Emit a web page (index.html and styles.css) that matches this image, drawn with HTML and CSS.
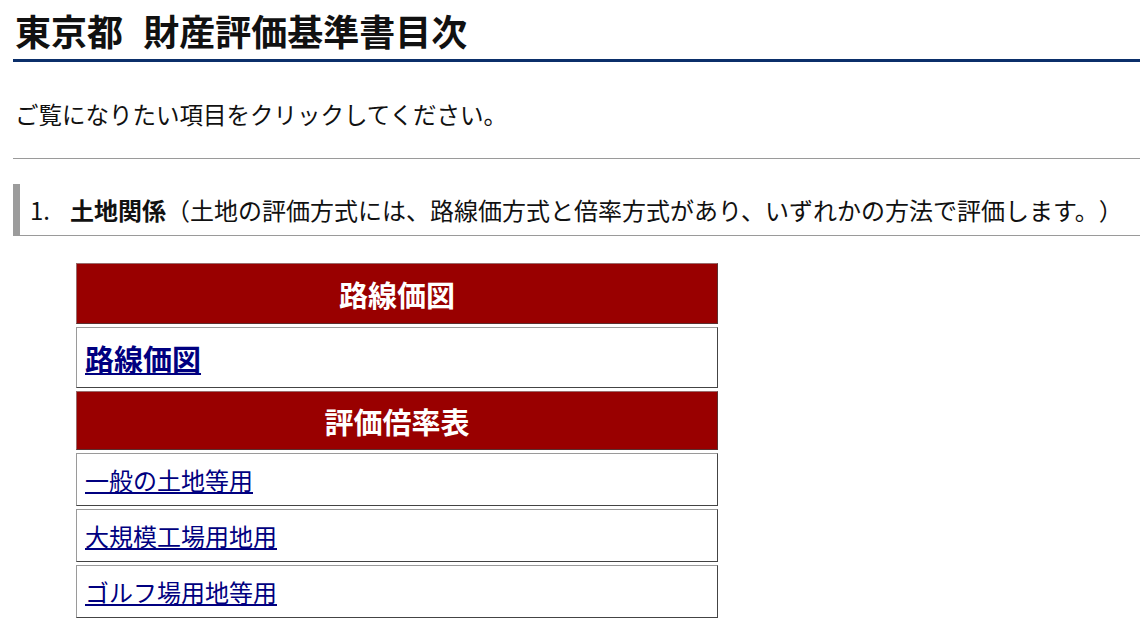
FILE: index.html
```html
<!DOCTYPE html>
<html lang="ja">
<head>
<meta charset="utf-8">
<title>東京都 財産評価基準書目次</title>
<link rel="stylesheet" href="styles.css">
</head>
<body>
<div class="page">
  <h1 class="title">東京都 財産評価基準書目次</h1>
  <p class="intro">ご覧になりたい項目をクリックしてください。</p>
  <hr class="rule">
  <h2 class="section"><span class="num">1.</span><strong>土地関係</strong>（土地の評価方式には、路線価方式と倍率方式があり、いずれかの方法で評価します。）</h2>
  <div class="menu">
    <div class="cell head h1">路線価図</div>
    <div class="cell big"><a href="#">路線価図</a></div>
    <div class="cell head h2">評価倍率表</div>
    <div class="cell item"><a href="#">一般の土地等用</a></div>
    <div class="cell item"><a href="#">大規模工場用地用</a></div>
    <div class="cell item"><a href="#">ゴルフ場用地等用</a></div>
  </div>
</div>
</body>
</html>
```

FILE: styles.css
```css
html, body {
  margin: 0;
  padding: 0;
  background: #fff;
}
body {
  font-family: "Noto Sans CJK JP", "Noto Sans", sans-serif;
  color: #111;
  text-spacing-trim: space-all;
}
.page {
  padding-left: 13px;
}
.title {
  margin: 0;
  padding: 4px 0 0 2px;
  font-size: 36px;
  line-height: 52px;
  height: 55px;
  font-weight: bold;
  word-spacing: 12px;
  border-bottom: 3px solid #0b2f6a;
}
.intro {
  margin: 0;
  padding: 35px 0 0 2px;
  font-size: 23.5px;
  line-height: 34px;
  height: 61px;
}
.rule {
  margin: 0;
  border: 0;
  border-top: 1px solid #9a9a9a;
  height: 0;
}
.section {
  margin: 25px 0 0 0;
  height: 51px;
  border-left: 7px solid #9c9c9c;
  border-bottom: 1px solid #9a9a9a;
  padding-left: 10px;
  font-size: 24px;
  line-height: 50px;
  font-weight: normal;
  display: flex;
  align-items: center;
  white-space: nowrap;
}
.section .num {
  margin-right: 20px;
}
.section strong {
  font-weight: bold;
}
.menu {
  margin: 27px 0 0 63px;
  width: 642px;
  display: flex;
  flex-direction: column;
  gap: 3px;
}
.cell {
  box-sizing: border-box;
  border: 1px solid;
  border-color: #9a9a9a #444 #444 #9a9a9a;
  display: flex;
  align-items: center;
  padding: 0 8px;
}
.head {
  background: #990000;
  color: #fff;
  font-weight: bold;
  font-size: 29px;
  justify-content: center;
  border-color: #9a6a6a #5a3030 #5a3030 #9a6a6a;
}
.h1 { height: 61px; }
.h2 { height: 59px; }
.big {
  height: 61px;
  font-size: 29px;
  font-weight: bold;
}
.item {
  height: 53px;
  font-size: 24px;
}
.cell a {
  color: #000080;
  text-decoration: underline;
}
```
